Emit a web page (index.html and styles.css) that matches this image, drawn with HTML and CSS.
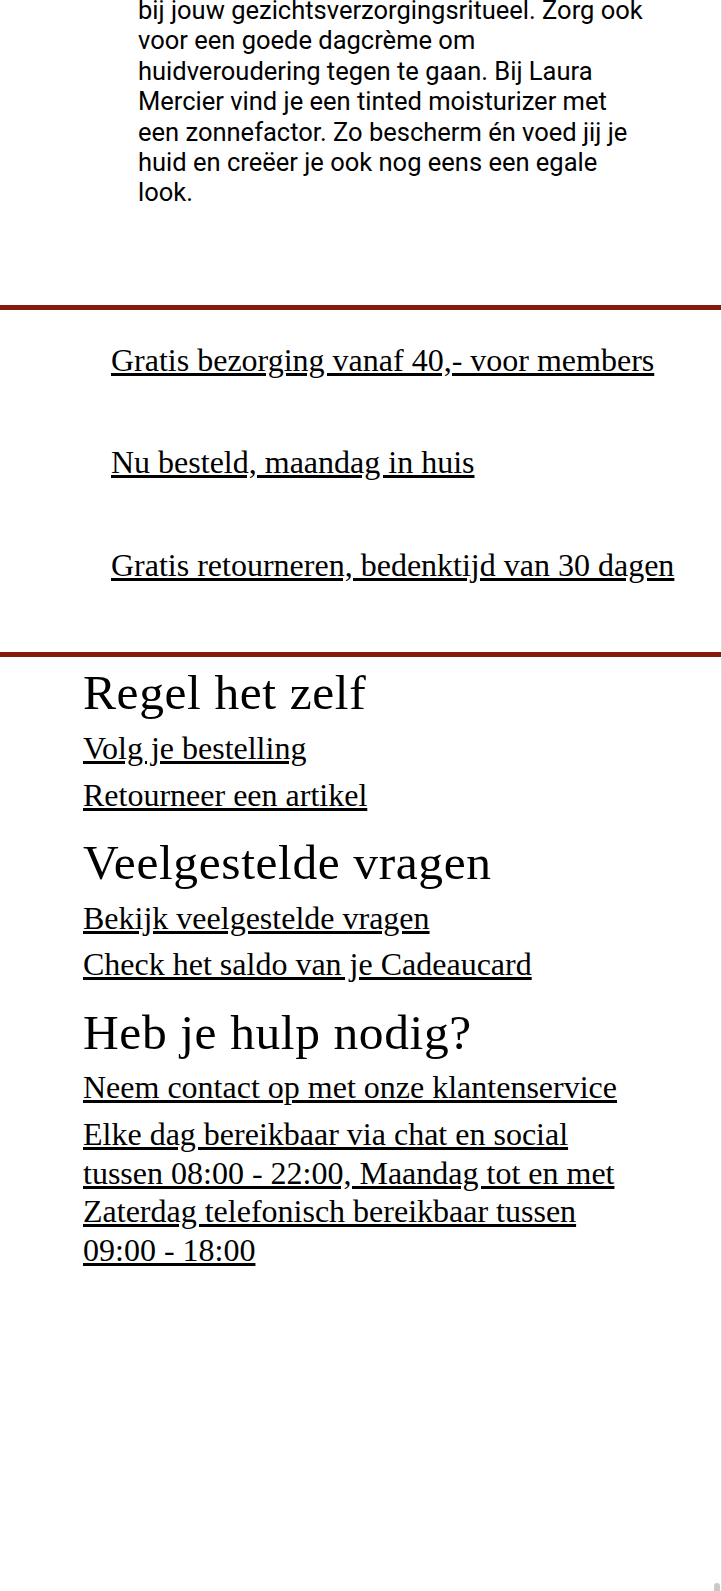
FILE: index.html
```html
<!DOCTYPE html>
<html lang="nl">
<head>
<meta charset="utf-8">
<title>Laura Mercier</title>
<link rel="stylesheet" href="styles.css">
</head>
<body>
<div class="page">
  <section class="intro">
    <p class="intro-text">bij jouw gezichtsverzorgingsritueel. Zorg ook voor een goede dagcrème om huidveroudering tegen te gaan. Bij Laura Mercier vind je een tinted moisturizer met een zonnefactor. Zo bescherm én voed jij je huid en creëer je ook nog eens een egale look.</p>
  </section>

  <ul class="usps">
    <li><a href="#">Gratis bezorging vanaf 40,- voor members</a></li>
    <li><a href="#">Nu besteld, maandag in huis</a></li>
    <li><a href="#">Gratis retourneren, bedenktijd van 30 dagen</a></li>
  </ul>

  <footer class="service">
    <div class="service-block">
      <h2 class="service-title">Regel het zelf</h2>
      <ul class="service-links">
        <li><a href="#">Volg je bestelling</a></li>
        <li><a href="#">Retourneer een artikel</a></li>
      </ul>
    </div>
    <div class="service-block">
      <h2 class="service-title">Veelgestelde vragen</h2>
      <ul class="service-links">
        <li><a href="#">Bekijk veelgestelde vragen</a></li>
        <li><a href="#">Check het saldo van je Cadeaucard</a></li>
      </ul>
    </div>
    <div class="service-block">
      <h2 class="service-title">Heb je hulp nodig?</h2>
      <ul class="service-links">
        <li><a href="#">Neem contact op met onze klantenservice</a></li>
        <li><a href="#">Elke dag bereikbaar via chat en social tussen 08:00 - 22:00, Maandag tot en met Zaterdag telefonisch bereikbaar tussen 09:00 - 18:00</a></li>
      </ul>
    </div>
  </footer>
  <div class="scroll-thumb"></div>
</div>
</body>
</html>
```

FILE: styles.css
```css
html, body {
  margin: 0;
  padding: 0;
  background: #ffffff;
}

body {
  overflow: hidden;
}

.page {
  box-sizing: border-box;
  width: 722px;
  height: 1591px;
  border-right: 1px solid #dedede;
  overflow: hidden;
  font-family: "Liberation Serif", "Times New Roman", serif;
  color: #000000;
}

.intro {
  margin-top: -5px;
  padding: 0 0 97px 138px;
}

.intro-text {
  margin: 0;
  width: 512px;
  font-family: Roboto, "Noto Sans", sans-serif;
  font-size: 25.5px;
  line-height: 30.4px;
  color: #000000;
}

.usps {
  list-style: none;
  margin: 0;
  padding: 31px 0 68px 111px;
  border-top: 5px solid #861a0c;
  border-bottom: 5px solid #861a0c;
  display: flex;
  flex-direction: column;
  gap: 64px;
}

.usps a,
.service-links a {
  font-size: 32px;
  line-height: 38.4px;
  color: #000000;
  text-decoration: underline;
}

.usps li,
.service-links li {
  font-size: 32px;
  line-height: 38.4px;
}

.service {
  padding-left: 83px;
  display: flex;
  flex-direction: column;
  gap: 13px;
}

.service-title {
  margin: 0 0 7px 0;
  padding-top: 7px;
  font-family: "Liberation Serif", "Times New Roman", serif;
  font-weight: normal;
  font-size: 49.5px;
  line-height: 57.6px;
  letter-spacing: 0.6px;
  color: #000000;
}

.service-links {
  list-style: none;
  margin: 0;
  padding: 0;
  width: 560px;
  display: flex;
  flex-direction: column;
  gap: 8.5px;
}

.scroll-thumb {
  position: fixed;
  right: 2px;
  bottom: 0;
  width: 6px;
  height: 8px;
  border-radius: 3px 3px 0 0;
  background: #c9c9c9;
}
```
